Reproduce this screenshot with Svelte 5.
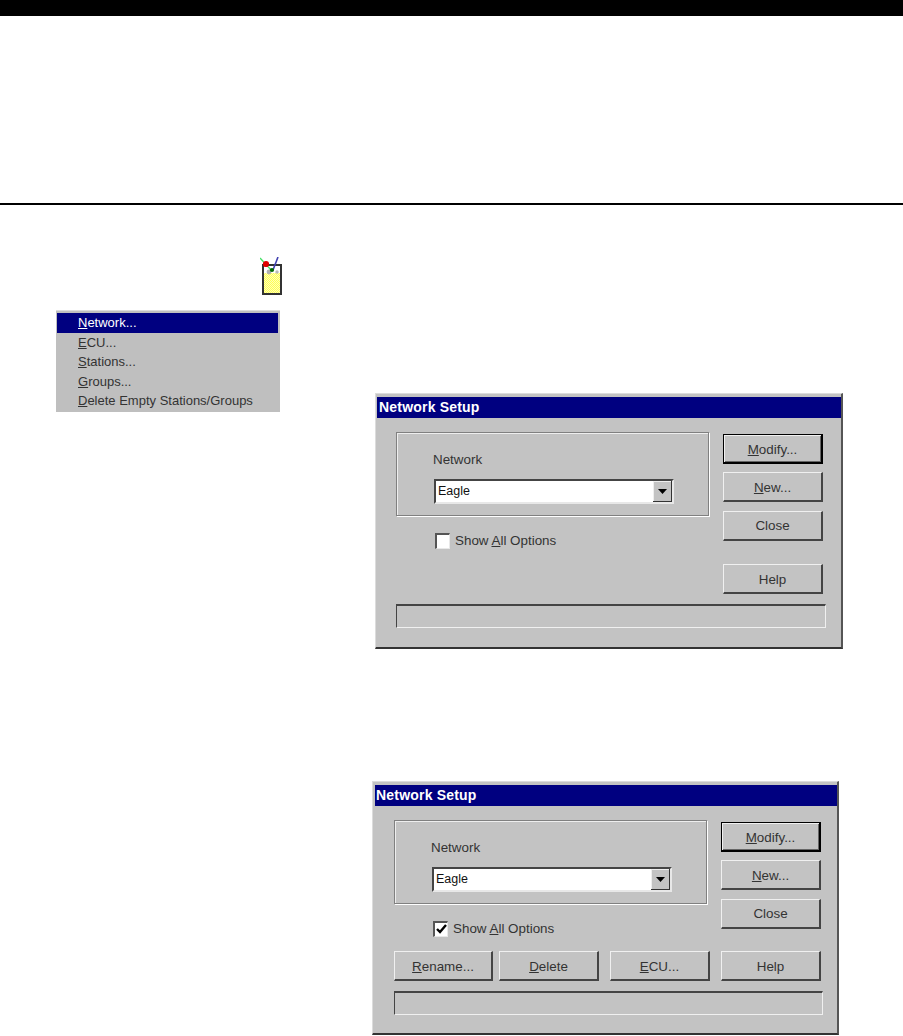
<script>
	const menu_items = [
		{ key: 'N', rest: 'etwork...', selected: true },
		{ key: 'E', rest: 'CU...' },
		{ key: 'S', rest: 'tations...' },
		{ key: 'G', rest: 'roups...' },
		{ key: 'D', rest: 'elete Empty Stations/Groups' },
	];
</script>

{#snippet win_button(key, rest, extra = '')}
	<button type="button" class="btn {extra}">{#if key}<u>{key}</u>{/if}{rest}</button>
{/snippet}

{#snippet dialog(expanded)}
	<div class="dialog" class:expanded>
		<div class="title">Network Setup</div>
		<div class="top">
			<div class="left">
				<div class="group">
					<div class="label">Network</div>
					<div class="combo">
						<span class="combo-value">Eagle</span>
						<span class="combo-arrow">
							<svg width="9" height="5" viewBox="0 0 9 5"><path d="M0 0h9L4.5 5z" fill="#000" /></svg>
						</span>
					</div>
				</div>
				<div class="check-row">
					<span class="check">
						{#if expanded}
							<svg width="11" height="11" viewBox="0 0 11 11">
								<path d="M1 5l3 3 6-7" fill="none" stroke="#000" stroke-width="2.4" />
							</svg>
						{/if}
					</span>
					<span class="check-label">Show <u>A</u>ll Options</span>
				</div>
			</div>
			<div class="right">
				{@render win_button('M', 'odify...', 'default')}
				{@render win_button('N', 'ew...')}
				{@render win_button('', 'Close', 'close')}
			</div>
		</div>
		<div class="bottom">
			{#if expanded}
				{@render win_button('R', 'ename...', 'rename')}
				{@render win_button('D', 'elete')}
				{@render win_button('E', 'CU...')}
			{/if}
			{@render win_button('', 'Help')}
		</div>
		<div class="status"></div>
	</div>
{/snippet}

<div class="page">
	<div class="topbar"></div>
	<div class="rule"></div>
	<div class="content">
		<div class="side">
			<svg class="tool-icon" width="24" height="38" viewBox="0 0 24 38">
				<defs>
					<pattern id="dither" width="2" height="2" patternUnits="userSpaceOnUse">
						<rect width="2" height="2" fill="#ffff55" />
						<rect width="1" height="1" fill="#ffffb8" />
						<rect x="1" y="1" width="1" height="1" fill="#ffffb8" />
					</pattern>
				</defs>
				<rect x="3" y="8" width="18" height="29" fill="url(#dither)" stroke="#333" stroke-width="2" />
				<rect x="4" y="9" width="16" height="7" fill="#fff" />
				<circle cx="9" cy="15" r="2.4" fill="#b0b0b0" />
				<circle cx="17" cy="15" r="1.7" fill="#b8b8b8" />
				<path d="M0 1l12 13" stroke="#44e066" stroke-width="1.3" fill="none" />
				<path d="M13 13l5-13" stroke="#4040b0" stroke-width="1.6" fill="none" />
				<circle cx="6" cy="7" r="3.1" fill="#e00000" />
				<circle cx="12" cy="13" r="2.1" fill="#006600" />
			</svg>
			<div class="menu">
				{#each menu_items as item}
					<div class="menu-item" class:selected={item.selected}><u>{item.key}</u>{item.rest}</div>
				{/each}
			</div>
		</div>
		<div class="main">
			{@render dialog(false)}
			{@render dialog(true)}
		</div>
	</div>
</div>

<style>
	:global(body) {
		background: #fff;
		overflow: hidden;
	}
	.page {
		width: 903px;
		height: 1036px;
		overflow: hidden;
		font-family: 'Liberation Sans', Arial, sans-serif;
		font-size: 13.4px;
		color: #222;
	}
	.topbar {
		height: 16px;
		background: #000;
	}
	.rule {
		height: 2px;
		margin-top: 187px;
		background: #000;
	}
	.content {
		display: flex;
	}
	.side {
		width: 372px;
		flex: none;
		padding-top: 52px;
	}
	.tool-icon {
		display: block;
		margin-left: 260px;
	}
	.menu {
		width: 224px;
		height: 102px;
		box-sizing: border-box;
		margin: 15px 0 0 56px;
		padding: 2px 2px 0 1px;
		background: #bfbfbf;
		border-top: 1px solid #dcdcdc;
		font-size: 13px;
	}
	.menu-item {
		height: 19.4px;
		line-height: 19.4px;
		padding-left: 21px;
		color: #333;
	}
	.menu-item.selected {
		background: #000080;
		color: #fff;
		height: 20px;
		line-height: 20px;
	}
	.main {
		padding-top: 188px;
	}
	.dialog {
		width: 468px;
		height: 256px;
		margin-left: 3px;
		box-sizing: border-box;
		background: #c3c3c3;
		padding: 3px 0 0 1px;
		border-top: 1px solid #dcdcdc;
		border-left: 1px solid #dcdcdc;
		border-right: 2px solid #555;
		border-bottom: 2px solid #333;
	}
	.dialog.expanded {
		margin-top: 132px;
		margin-left: 0;
		width: 467px;
		height: 254px;
		padding-left: 2px;
	}
	.title {
		height: 21px;
		line-height: 21px;
		margin-bottom: 14px;
		padding-left: 2px;
		background: #000080;
		color: #fff;
		font-weight: bold;
		font-size: 14px;
		letter-spacing: 0.2px;
	}
	.expanded .title {
		padding-left: 1px;
	}
	.top {
		display: flex;
		justify-content: space-between;
		padding: 0 18px 0 19px;
		height: 132px;
	}
	.expanded .top {
		height: 131px;
		padding-right: 16px;
	}
	.group {
		width: 313px;
		height: 84px;
		box-sizing: border-box;
		padding: 20px 0 0 37px;
		border: 1px solid #808080;
		box-shadow: 1px 1px 0 #fff, inset 1px 1px 0 #eee;
	}
	.label {
		height: 26px;
		line-height: 14px;
		margin-left: -1px;
		color: #333;
	}
	.combo {
		display: flex;
		align-items: stretch;
		width: 240px;
		height: 25px;
		box-sizing: border-box;
		border-top: 2px solid #444;
		border-left: 2px solid #444;
		border-right: 2px solid #e8e8e8;
		border-bottom: 2px solid #e8e8e8;
		background: #fff;
		font-size: 12.5px;
	}
	.combo-value {
		flex: 1;
		padding-left: 2px;
		line-height: 21px;
		color: #111;
	}
	.combo-arrow {
		width: 19px;
		display: flex;
		align-items: center;
		justify-content: center;
		background: #c3c3c3;
		box-shadow: inset -1px -1px 0 #333, inset 1px 1px 0 #eee;
	}
	.check-row {
		display: flex;
		align-items: center;
		gap: 5px;
		margin: 17px 0 0 39px;
		height: 16px;
		color: #333;
	}
	.check-label {
		padding-bottom: 2px;
	}
	.check {
		width: 15px;
		height: 16px;
		box-sizing: border-box;
		display: flex;
		align-items: center;
		justify-content: center;
		background: #fff;
		border-top: 2px solid #555;
		border-left: 2px solid #555;
		border-right: 1px solid #e8e8e8;
		border-bottom: 1px solid #e8e8e8;
	}
	.right {
		display: flex;
		flex-direction: column;
		gap: 8px;
		padding-top: 2px;
	}
	.bottom {
		display: flex;
		justify-content: flex-end;
		gap: 6px;
		padding-right: 18px;
		height: 40px;
	}
	.expanded .bottom {
		padding-right: 16px;
	}
	.expanded .bottom button:nth-child(3) {
		margin: 0 5px;
	}
	.btn {
		width: 100px;
		height: 30px;
		padding: 2px 0 0;
		box-sizing: border-box;
		font: inherit;
		color: #333;
		background: #c3c3c3;
		border: none;
		border-top: 1px solid #f0f0f0;
		border-left: 1px solid #f0f0f0;
		border-right: 2px solid #444;
		border-bottom: 2px solid #444;
	}
	.btn.close {
		margin-top: 1px;
		padding-top: 0;
	}
	.btn.rename {
		width: 99px;
	}
	.btn.default {
		border: 1px solid #000;
		border-right-width: 2px;
		border-bottom-width: 2px;
		box-shadow: inset 1px 1px 0 #f0f0f0, inset -1px -1px 0 #666;
	}
	.status {
		width: 430px;
		height: 24px;
		box-sizing: border-box;
		margin-left: 19px;
		border-top: 2px solid #444;
		border-left: 1px solid #444;
		border-right: 1px solid #f0f0f0;
		border-bottom: 1px solid #f0f0f0;
	}
	.expanded .status {
		width: 429px;
	}
</style>
